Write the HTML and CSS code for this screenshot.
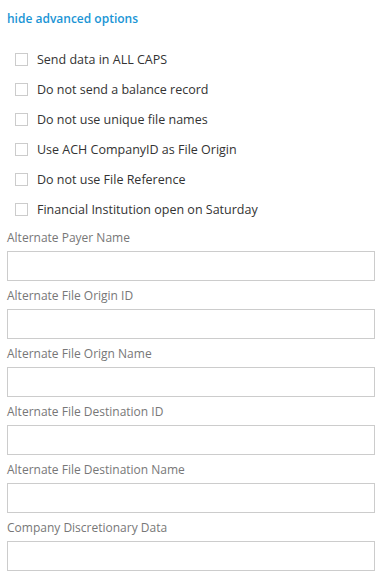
FILE: index.html
```html
<!DOCTYPE html>
<html lang="en">
<head>
    <meta charset="UTF-8">
    <meta name="viewport" content="width=device-width, initial-scale=1.0">
    <title>Advanced Options</title>
    <link rel="stylesheet" href="styles.css">
</head>
<body>
    <div class="panel">
        <a href="#" class="toggle">hide advanced options</a>

        <!-- Flags -->
        <ul class="options">
            <li><label><input type="checkbox"><span class="box"></span>Send data in ALL CAPS</label></li>
            <li><label><input type="checkbox"><span class="box"></span>Do not send a balance record</label></li>
            <li><label><input type="checkbox"><span class="box"></span>Do not use unique file names</label></li>
            <li><label><input type="checkbox"><span class="box"></span>Use ACH CompanyID as File Origin</label></li>
            <li><label><input type="checkbox"><span class="box"></span>Do not use File Reference</label></li>
            <li><label><input type="checkbox"><span class="box"></span>Financial Institution open on Saturday</label></li>
        </ul>

        <!-- Overrides -->
        <div class="field">
            <label for="payer-name">Alternate Payer Name</label>
            <input type="text" id="payer-name">
        </div>
        <div class="field">
            <label for="origin-id">Alternate File Origin ID</label>
            <input type="text" id="origin-id">
        </div>
        <div class="field">
            <label for="origin-name">Alternate File Orign Name</label>
            <input type="text" id="origin-name">
        </div>
        <div class="field">
            <label for="dest-id">Alternate File Destination ID</label>
            <input type="text" id="dest-id">
        </div>
        <div class="field">
            <label for="dest-name">Alternate File Destination Name</label>
            <input type="text" id="dest-name">
        </div>
        <div class="field">
            <label for="discretionary">Company Discretionary Data</label>
            <input type="text" id="discretionary">
        </div>
    </div>
</body>
</html>
```

FILE: styles.css
```css
body {
    font-family: "Open Sans", Arial, sans-serif;
    background-color: #fff;
    margin: 0;
}
.panel {
    padding: 10px 5px 0 7px;
}
.toggle {
    display: block;
    color: #1a95d5;
    font-size: 12px;
    font-weight: 600;
    line-height: 18px;
    text-decoration: none;
}
.toggle:hover {
    text-decoration: underline;
}
.options {
    list-style: none;
    margin: 16px 0 3px;
    padding: 0 0 0 8px;
}
.options li {
    height: 30px;
    display: flex;
    align-items: center;
}
.options label {
    display: flex;
    align-items: center;
    font-size: 12.5px;
    color: #333;
    cursor: pointer;
}
.options input {
    display: none;
}
.box {
    width: 11px;
    height: 11px;
    border: 1px solid #ccc;
    margin-right: 9px;
    background: #fff;
}
.options input:checked + .box {
    background: #1a95d5;
    border-color: #1a95d5;
}
.field {
    margin-bottom: 4px;
}
.field label {
    display: block;
    font-size: 12px;
    line-height: 18px;
    padding-top: 2px;
    color: #777;
    margin-bottom: 4px;
}
.field input {
    box-sizing: border-box;
    width: 100%;
    height: 30px;
    border: 1px solid #ccc;
    border-radius: 0;
    padding: 0 8px;
    font-family: inherit;
    font-size: 13px;
    margin: 0;
}
```
